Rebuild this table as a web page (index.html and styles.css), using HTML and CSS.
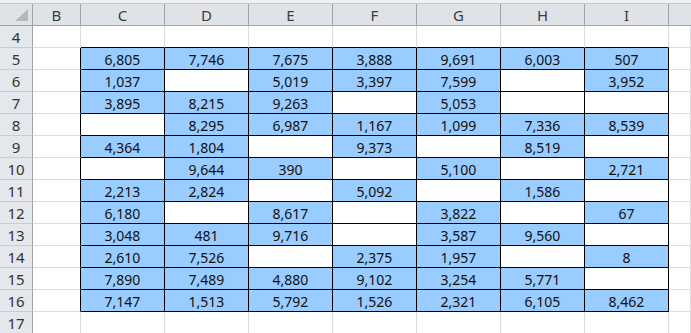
FILE: index.html
```html
<!DOCTYPE html>
<html>
<head>
<meta charset="utf-8">
<link rel="stylesheet" href="styles.css">
</head>
<body>
<div class="stripe"></div>
<div class="sheet">
  <div class="ch corner"><span class="tri"></span></div><div class="ch">B</div><div class="ch">C</div><div class="ch">D</div><div class="ch">E</div><div class="ch">F</div><div class="ch">G</div><div class="ch">H</div><div class="ch">I</div><div class="ch last"></div>

  <div class="rh">4</div><div class="c"></div><div class="c top"></div><div class="c top"></div><div class="c top"></div><div class="c top"></div><div class="c top"></div><div class="c top"></div><div class="c top"></div><div class="c"></div>

  <div class="rh">5</div><div class="c lft"></div><div class="t v">6,805</div><div class="t v">7,746</div><div class="t v">7,675</div><div class="t v">3,888</div><div class="t v">9,691</div><div class="t v">6,003</div><div class="t v">507</div><div class="c"></div>

  <div class="rh">6</div><div class="c lft"></div><div class="t v">1,037</div><div class="t"></div><div class="t v">5,019</div><div class="t v">3,397</div><div class="t v">7,599</div><div class="t"></div><div class="t v">3,952</div><div class="c"></div>

  <div class="rh">7</div><div class="c lft"></div><div class="t v">3,895</div><div class="t v">8,215</div><div class="t v">9,263</div><div class="t"></div><div class="t v">5,053</div><div class="t"></div><div class="t"></div><div class="c"></div>

  <div class="rh">8</div><div class="c lft"></div><div class="t"></div><div class="t v">8,295</div><div class="t v">6,987</div><div class="t v">1,167</div><div class="t v">1,099</div><div class="t v">7,336</div><div class="t v">8,539</div><div class="c"></div>

  <div class="rh">9</div><div class="c lft"></div><div class="t v">4,364</div><div class="t v">1,804</div><div class="t"></div><div class="t v">9,373</div><div class="t"></div><div class="t v">8,519</div><div class="t"></div><div class="c"></div>

  <div class="rh">10</div><div class="c lft"></div><div class="t"></div><div class="t v">9,644</div><div class="t v">390</div><div class="t"></div><div class="t v">5,100</div><div class="t"></div><div class="t v">2,721</div><div class="c"></div>

  <div class="rh">11</div><div class="c lft"></div><div class="t v">2,213</div><div class="t v">2,824</div><div class="t"></div><div class="t v">5,092</div><div class="t"></div><div class="t v">1,586</div><div class="t"></div><div class="c"></div>

  <div class="rh">12</div><div class="c lft"></div><div class="t v">6,180</div><div class="t"></div><div class="t v">8,617</div><div class="t"></div><div class="t v">3,822</div><div class="t"></div><div class="t v">67</div><div class="c"></div>

  <div class="rh">13</div><div class="c lft"></div><div class="t v">3,048</div><div class="t v">481</div><div class="t v">9,716</div><div class="t"></div><div class="t v">3,587</div><div class="t v">9,560</div><div class="t"></div><div class="c"></div>

  <div class="rh">14</div><div class="c lft"></div><div class="t v">2,610</div><div class="t v">7,526</div><div class="t"></div><div class="t v">2,375</div><div class="t v">1,957</div><div class="t"></div><div class="t v">8</div><div class="c"></div>

  <div class="rh">15</div><div class="c lft"></div><div class="t v">7,890</div><div class="t v">7,489</div><div class="t v">4,880</div><div class="t v">9,102</div><div class="t v">3,254</div><div class="t v">5,771</div><div class="t"></div><div class="c"></div>

  <div class="rh">16</div><div class="c lft"></div><div class="t v">7,147</div><div class="t v">1,513</div><div class="t v">5,792</div><div class="t v">1,526</div><div class="t v">2,321</div><div class="t v">6,105</div><div class="t v">8,462</div><div class="c"></div>

  <div class="rh">17</div><div class="c"></div><div class="c"></div><div class="c"></div><div class="c"></div><div class="c"></div><div class="c"></div><div class="c"></div><div class="c"></div><div class="c"></div>
</div>
</body>
</html>
```

FILE: styles.css
```css
html, body {
  margin: 0;
  padding: 0;
  background: #ffffff;
  overflow: hidden;
}

body {
  width: 691px;
  height: 333px;
  font-family: "Noto Sans", "Open Sans", sans-serif;
}

.stripe {
  height: 3px;
  background: #eef0f2;
  border-bottom: 1px solid #c3c6ca;
}

.sheet {
  display: grid;
  grid-template-columns: 33px 48px repeat(7, 84px) 1fr;
  grid-template-rows: 22px repeat(14, 22px);
}

.sheet > div {
  box-sizing: border-box;
  border-right: 1px solid #dadcdd;
  border-bottom: 1px solid #dadcdd;
  display: flex;
  align-items: center;
  justify-content: center;
  font-size: 14px;
  line-height: 1;
  color: #111;
}

.sheet > .ch {
  background: #dfe3e8;
  border-right: 1px solid #9ea3a8;
  border-bottom: 1px solid #9ea3a8;
  color: #3c3c3c;
  font-size: 15px;
  padding-top: 2px;
}

.sheet > .ch.last {
  border-right: none;
}

.corner {
  position: relative;
}

.tri {
  position: absolute;
  right: 4px;
  bottom: 4px;
  width: 0;
  height: 0;
  border-left: 13px solid transparent;
  border-bottom: 12px solid #b5b8bb;
}

.sheet > .rh {
  background: #e4e7eb;
  border-right: 1px solid #9ea3a8;
  border-bottom: 1px solid #c8ccd1;
  color: #333333;
  font-size: 15px;
  padding-top: 2px;
}

.sheet > .top {
  border-bottom: 1px solid #000;
}

.sheet > .lft {
  border-right: 1px solid #000;
}

.sheet > .t {
  border-right: 1px solid #000;
  border-bottom: 1px solid #000;
  padding-top: 2px;
  background: #ffffff;
}

.sheet > .t.v {
  background: #99ccff;
}
```
